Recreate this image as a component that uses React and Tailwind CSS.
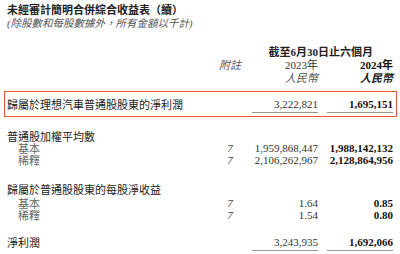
import React from 'react';

const SANS = "font-['Noto_Sans_CJK_TC','Noto_Sans_CJK_SC',sans-serif]";
const SERIF = "font-['Liberation_Serif','Noto_Sans_CJK_TC',serif]";

const Row = ({ label, note, a, b, indent, line, className = '' }) => (
    <div className={`flex items-center h-[12px] leading-[12px] text-[11px] ${className}`}>
        <div className={`flex-1 whitespace-nowrap ${SANS} ${indent ? 'pl-[11px] text-[#666]' : 'text-[#222]'}`}>
            {label}
        </div>
        <div className={`w-[30px] mr-[7px] text-center italic text-[#444] ${SERIF}`}>{note}</div>
        <div className={`w-[66px] relative text-right text-[#333] ${SERIF}`}>
            {a}
            {line && <div className={`absolute left-0 right-0 h-px bg-[#999] ${line}`} />}
        </div>
        <div className={`w-[66px] ml-[9px] relative text-right font-bold text-[#111] ${SERIF}`}>
            {b}
            {line && <div className={`absolute left-0 right-0 h-px bg-[#999] ${line}`} />}
        </div>
    </div>
);

export default function App() {
    return (
        <div className="w-[400px] h-[254px] bg-white overflow-hidden px-[7px] pt-[3px]">
            {/* Title */}
            <div className={`h-[12px] text-[11px] leading-[12px] font-semibold text-[#222] ${SANS}`}>
                未經審計簡明合併綜合收益表（續）
            </div>
            <div className={`mt-[3px] h-[12px] text-[10.5px] leading-[12px] italic text-[#555] whitespace-nowrap ${SERIF}`}>
                (除股數和每股數據外，所有金額以千計)
            </div>

            {/* Column header */}
            <div className="mt-[15px] flex justify-end pr-[20px] h-[12px] items-center text-[11px] leading-[12px]">
                <span className={`font-bold text-[#222] ${SANS}`}>
                    截至<span className={SERIF}>6</span>月<span className={SERIF}>30</span>日止六個月
                </span>
            </div>
            <div className="mt-[1px] flex items-center h-[12px] text-[11px] leading-[12px]">
                <div className="flex-1" />
                <div className={`w-[30px] mr-[7px] text-center italic text-[#555] ${SANS}`}>附註</div>
                <div className={`w-[66px] text-right text-[#333] ${SERIF}`}>
                    2023<span className={SANS}>年</span>
                </div>
                <div className={`w-[66px] ml-[9px] text-right font-bold text-[#111] ${SERIF}`}>
                    2024<span className={SANS}>年</span>
                </div>
            </div>
            <div className="mt-[1px] flex items-center h-[12px] text-[11px] leading-[12px]">
                <div className="flex-1" />
                <div className={`w-[66px] text-right italic text-[#555] ${SANS}`}>人民幣</div>
                <div className={`w-[66px] ml-[9px] text-right italic font-bold text-[#222] ${SANS}`}>人民幣</div>
            </div>

            {/* Highlighted row */}
            <div className="mt-[8px] -ml-[3px] -mr-[4px] border-[1.5px] border-[#e2553c] h-[26px] flex items-center pl-[2px] pr-[3px]">
                <div className="flex-1">
                    <Row label="歸屬於理想汽車普通股股東的淨利潤" a="3,222,821" b="1,695,151" line="top-[14px]" />
                </div>
            </div>

            <Row className="mt-[13px]" label="普通股加權平均數" />
            <Row indent label="基本" note="7" a="1,959,868,447" b="1,988,142,132" />
            <Row indent label="稀釋" note="7" a="2,106,262,967" b="2,128,864,956" />

            <Row className="mt-[17px]" label="歸屬於普通股股東的每股淨收益" />
            <Row className="mt-[2px]" indent label="基本" note="7" a="1.64" b="0.85" />
            <Row indent label="稀釋" note="7" a="1.54" b="0.80" />

            <Row className="mt-[15px]" label="淨利潤" a="3,243,935" b="1,692,066" line="top-[14px]" />
        </div>
    );
}
